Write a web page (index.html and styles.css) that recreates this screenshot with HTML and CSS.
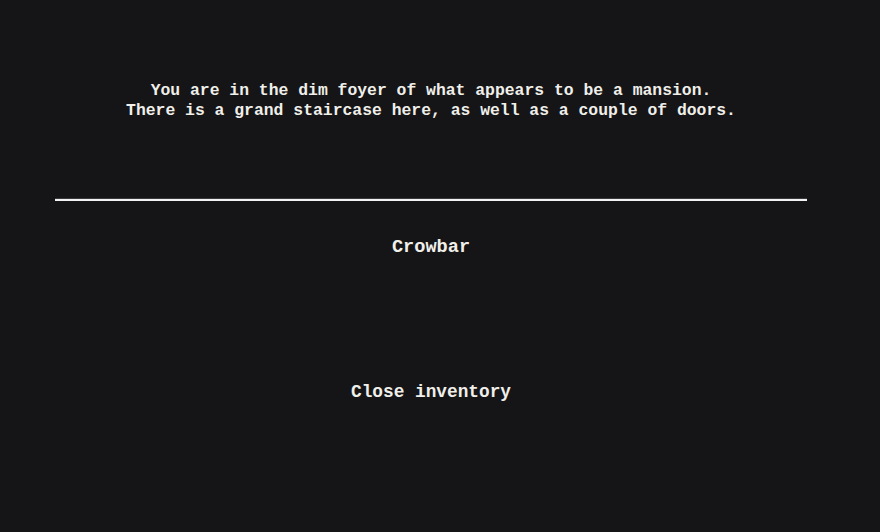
FILE: index.html
```html
<!DOCTYPE html>
<html>
<head>
<meta charset="utf-8">
<link rel="stylesheet" href="styles.css">
</head>
<body>
<main class="game">
  <section class="story">
    <p>You are in the dim foyer of what appears to be a mansion.<br>There is a grand staircase here, as well as a couple of doors.</p>
  </section>
  <hr class="divider">
  <section class="inventory">
    <div class="item">Crowbar</div>
    <div class="close">Close inventory</div>
  </section>
</main>
</body>
</html>
```
FILE: styles.css
```css
html, body {
  margin: 0;
  padding: 0;
  background: #151517;
  height: 100%;
}
body {
  color: #f0efea;
  font-family: "Liberation Mono", "DejaVu Sans Mono", monospace;
  font-weight: bold;
}
.game {
  width: 752px;
  margin-left: 55px;
  display: flex;
  flex-direction: column;
  align-items: stretch;
}
.story {
  padding-top: 81px;
  text-align: center;
  height: 199px;
  box-sizing: border-box;
  flex: none;
}
.story p {
  margin: 0;
  font-size: 16.4px;
  line-height: 19.5px;
  letter-spacing: 0;
}
.divider {
  margin: 0;
  border: 0;
  height: 2px;
  background: #f2f2f2;
  box-shadow: 0 -1px 0 #3a3a3c;
}
.inventory {
  display: flex;
  flex-direction: column;
  align-items: center;
}
.item {
  margin-top: 36px;
  font-size: 18.6px;
  line-height: 22px;
}
.close {
  margin-top: 122px;
  font-size: 17.8px;
  line-height: 22px;
}
```
